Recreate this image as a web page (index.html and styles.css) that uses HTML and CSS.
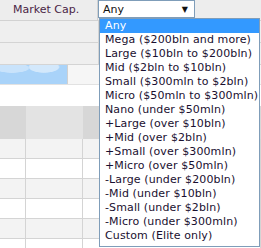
FILE: index.html
```html
<!DOCTYPE html>
<html lang="en">
<head>
    <meta charset="UTF-8" />
    <title>Screener - Market Cap.</title>
    <link rel="stylesheet" href="styles.css">
</head>
<body>

    <div class="screen">
        <!-- Filter header row -->
        <div class="row row-head">
            <div class="cell-label">Market Cap.</div>
            <div class="select-box">
                <span class="select-value">Any</span>
                <span class="select-arrow">&#9660;</span>
            </div>
        </div>

        <div class="row row-plain"><div class="cell-wide"></div></div>
        <div class="row row-plain"><div class="cell-wide"></div></div>

        <!-- Chart strip -->
        <div class="row row-chart">
            <div class="chart-sky"></div>
            <div class="chart-blank"></div>
        </div>

        <div class="row row-white"></div>

        <!-- Table header -->
        <div class="row row-thead">
            <div class="th th-no"></div>
            <div class="th th-ticker"></div>
            <div class="th th-rest"></div>
        </div>

        <!-- Table body -->
        <div class="row tr odd"><div class="td td-no"></div><div class="td td-ticker"></div><div class="td"></div></div>
        <div class="row tr"><div class="td td-no"></div><div class="td td-ticker"></div><div class="td"></div></div>
        <div class="row tr odd"><div class="td td-no"></div><div class="td td-ticker"></div><div class="td"></div></div>
        <div class="row tr"><div class="td td-no"></div><div class="td td-ticker"></div><div class="td"></div></div>
        <div class="row tr odd"><div class="td td-no"></div><div class="td td-ticker"></div><div class="td"></div></div>
        <div class="row tr"><div class="td td-no"></div><div class="td td-ticker"></div><div class="td"></div></div>

        <!-- Open dropdown -->
        <ul class="dropdown">
            <li class="selected">Any</li>
            <li>Mega ($200bln and more)</li>
            <li>Large ($10bln to $200bln)</li>
            <li>Mid ($2bln to $10bln)</li>
            <li>Small ($300mln to $2bln)</li>
            <li>Micro ($50mln to $300mln)</li>
            <li>Nano (under $50mln)</li>
            <li>+Large (over $10bln)</li>
            <li>+Mid (over $2bln)</li>
            <li>+Small (over $300mln)</li>
            <li>+Micro (over $50mln)</li>
            <li>-Large (under $200bln)</li>
            <li>-Mid (under $10bln)</li>
            <li>-Small (under $2bln)</li>
            <li>-Micro (under $300mln)</li>
            <li>Custom (Elite only)</li>
        </ul>
    </div>

</body>
</html>
```

FILE: styles.css
```css
body {
    margin: 0;
    padding: 0;
    font-family: "DejaVu Sans", Verdana, sans-serif;
    font-size: 11px;
    background-color: #ffffff;
    color: #1a1a1a;
}

.screen {
    position: relative;
    width: 261px;
    height: 248px;
    overflow: hidden;
}

.row {
    display: flex;
    box-sizing: border-box;
}

/* Filter row */
.row-head {
    height: 21px;
    background-color: #ededed;
    border-bottom: 1px solid #d2d2d2;
}

.cell-label {
    width: 98px;
    box-sizing: border-box;
    border-right: 1px solid #d2d2d2;
    padding: 3px 0 0 13px;
    color: #4a1f45;
    white-space: nowrap;
}

.select-box {
    width: 97px;
    height: 18px;
    box-sizing: border-box;
    border: 1px solid #7f9db9;
    background-color: #ffffff;
    display: flex;
    justify-content: space-between;
    padding: 2px 6px 0 4px;
    color: #111;
}

.select-arrow {
    font-size: 8px;
    padding-top: 2px;
}

.row-plain {
    height: 22px;
    background-color: #efefef;
    border-bottom: 1px solid #d4d4d4;
}

.cell-wide {
    width: 98px;
    border-right: 1px solid #d4d4d4;
}

/* Chart strip */
.row-chart {
    height: 20px;
    border-bottom: 1px solid #e2e2e2;
}

.chart-sky {
    width: 67px;
    border-right: 1px solid #d0d0d0;
    background-color: #a9d3f9;
    background-image:
        radial-gradient(ellipse 18px 5px at 12px 3px, #c9e3fb 90%, transparent 100%),
        radial-gradient(ellipse 16px 6px at 44px 2px, #d3e8fb 90%, transparent 100%);
}

.chart-blank {
    flex: 1;
    background-color: #f6f6f6;
}

.row-white {
    height: 21px;
    background-color: #ffffff;
}

/* Table */
.row-thead {
    height: 33px;
    background-color: #d7d7d7;
}

.th-no {
    width: 26px;
}

.th-ticker {
    width: 57px;
    background-color: #e3e3e3;
}

.th-rest {
    flex: 1;
}

.tr {
    height: 20px;
    background-color: #ffffff;
    border-bottom: 1px solid #d4d4d4;
}

.tr.odd {
    background-color: #f3f3f3;
}

.td {
    border-right: 1px solid #d4d4d4;
    flex: 1;
}

.td-no {
    flex: none;
    width: 25px;
}

.td-ticker {
    flex: none;
    width: 56px;
}

/* Dropdown list */
.dropdown {
    position: absolute;
    left: 99px;
    top: 18px;
    width: 161px;
    height: 229px;
    box-sizing: border-box;
    margin: 0;
    padding: 0;
    list-style: none;
    background-color: #ffffff;
    border: 1px solid #7f9db9;
}

.dropdown li {
    height: 14px;
    line-height: 14px;
    padding-left: 5px;
    white-space: nowrap;
    letter-spacing: 0.12px;
    color: #1a1030;
}

.dropdown li.selected {
    background-color: #3399ff;
    color: #ffffff;
}
```
